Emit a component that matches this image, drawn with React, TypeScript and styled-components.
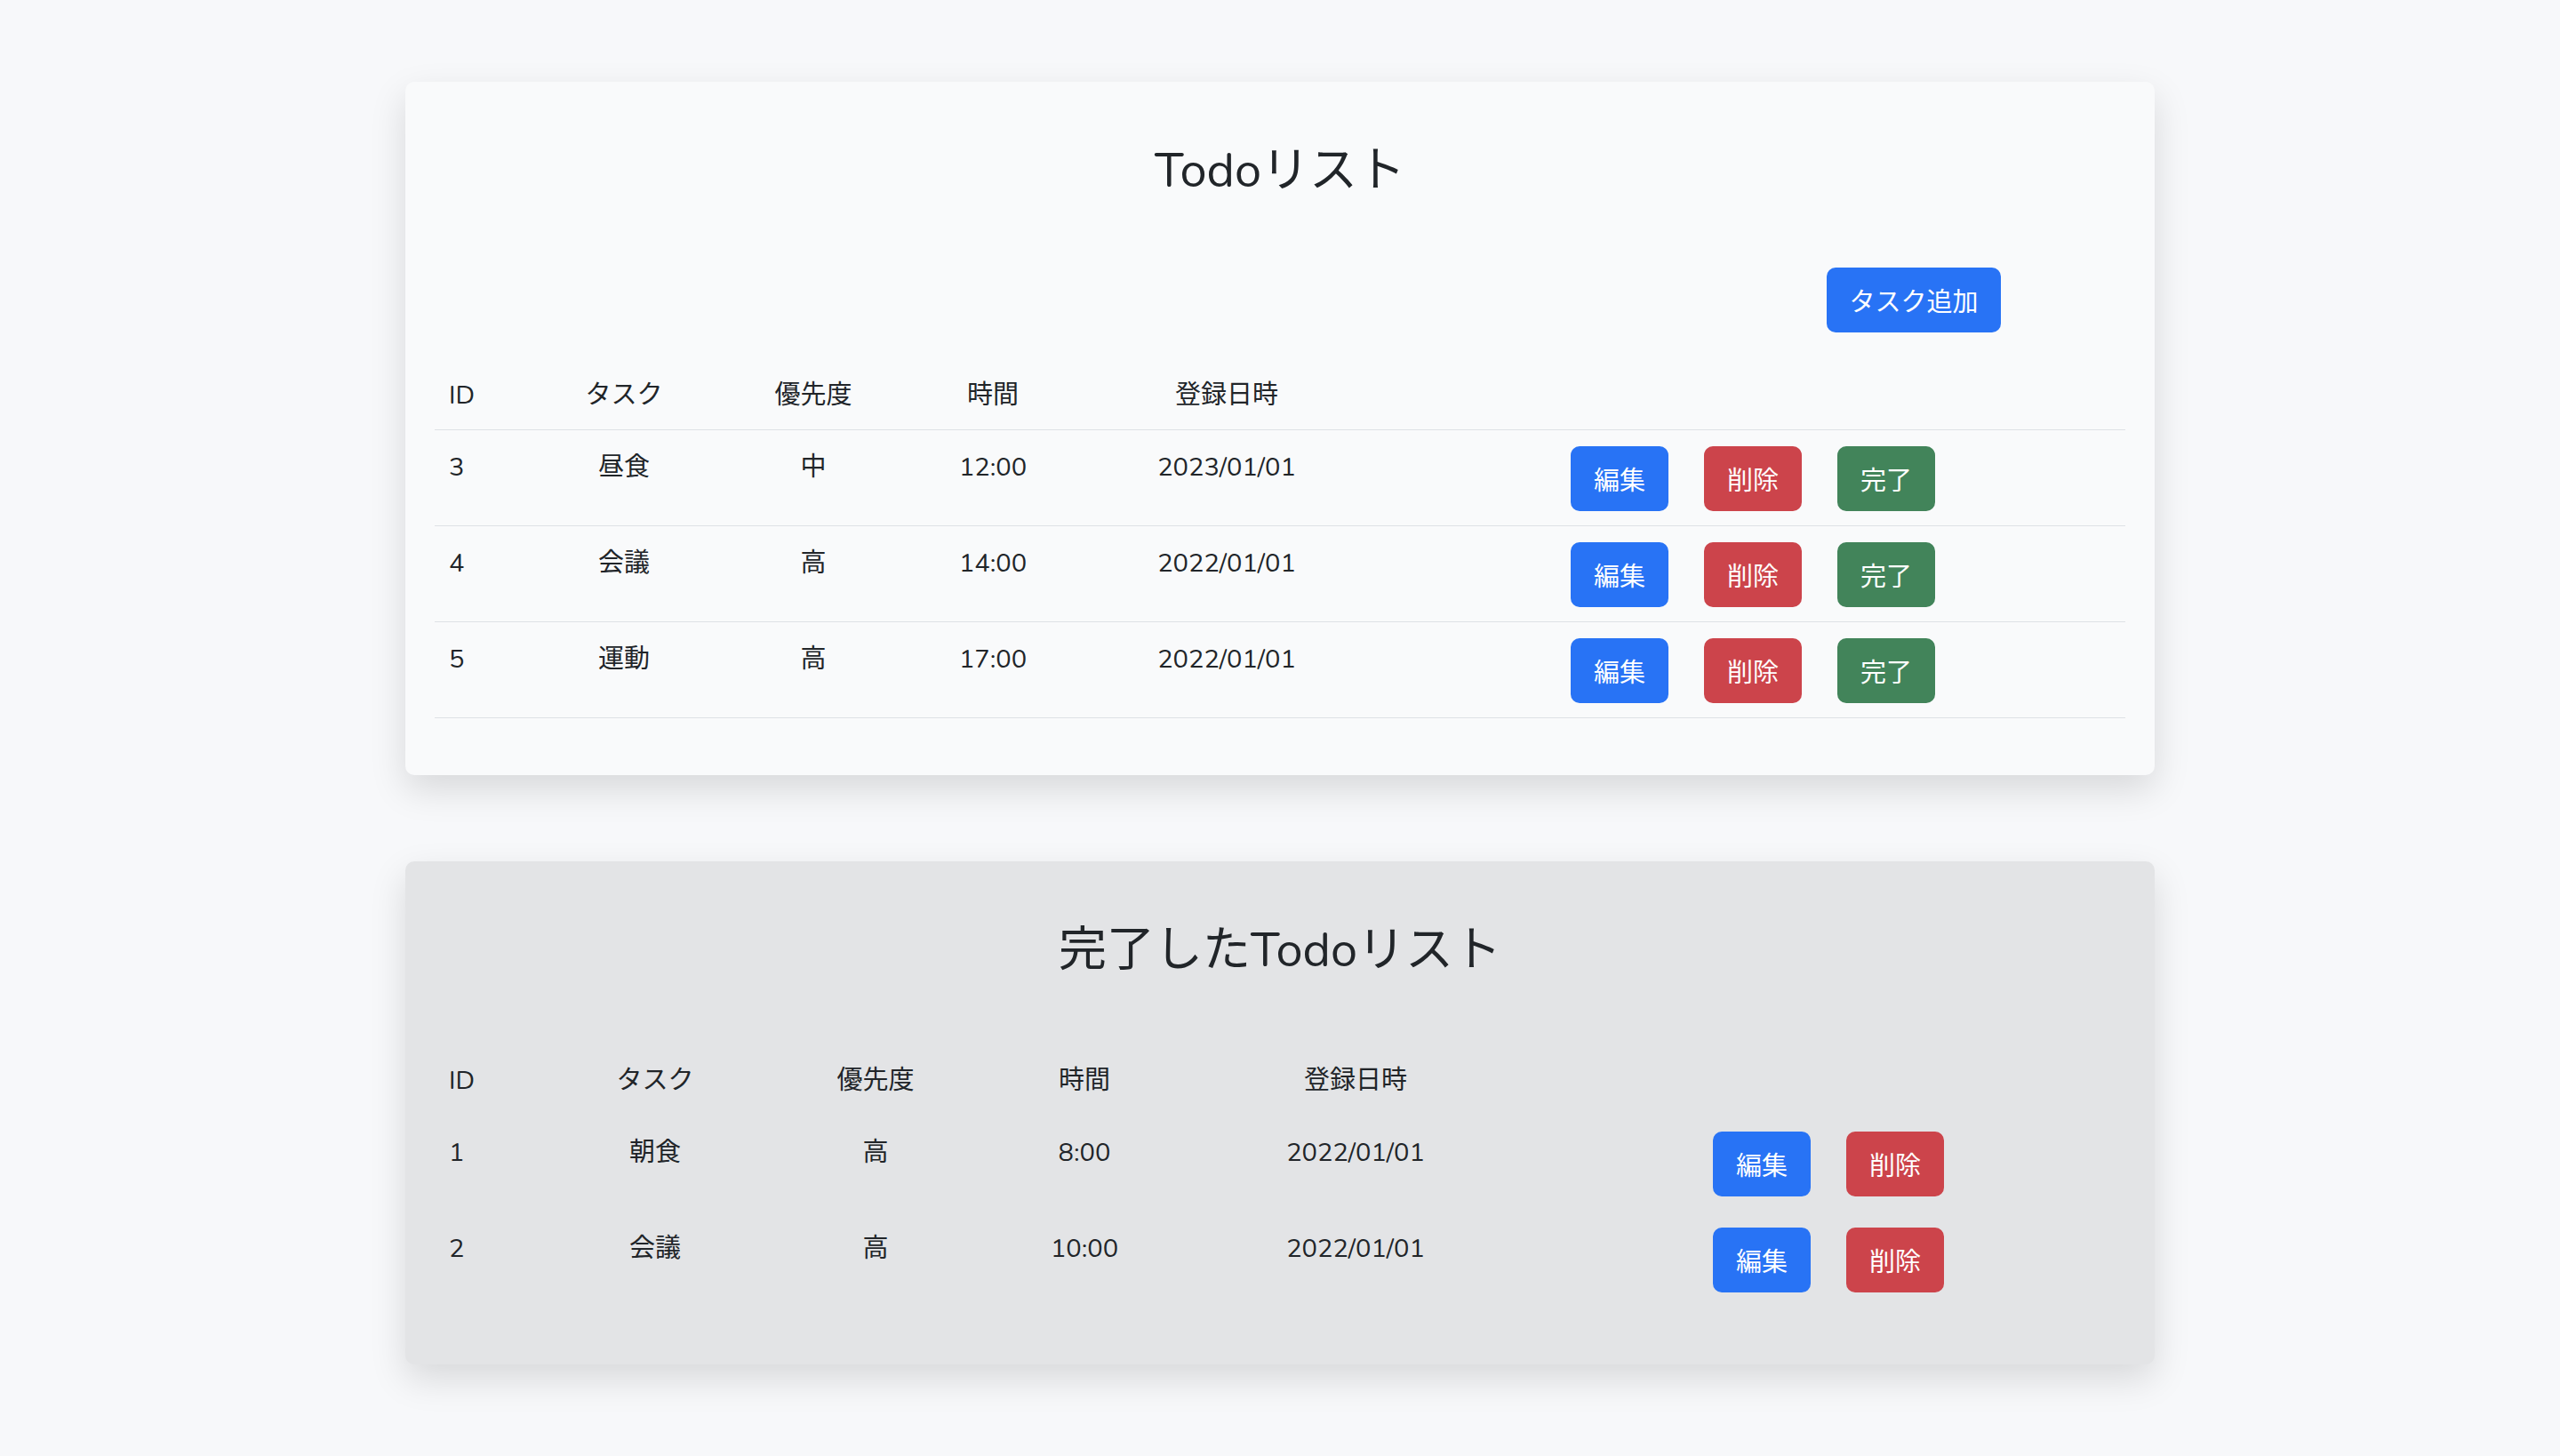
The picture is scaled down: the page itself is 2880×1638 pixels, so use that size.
import React from "react";
import styled, { createGlobalStyle } from "styled-components";

const Global = createGlobalStyle`
  body { margin: 0; background: #f7f8fa; font-family: "Nunito", Lato, "Noto Sans CJK JP", sans-serif; color: #212529; }
`;

const Page = styled.div`
  display: flex; flex-direction: column; align-items: center; gap: 97px; padding: 92px 0 98px;
`;
const Card = styled.div<{ $done?: boolean }>`
  width: 1968px; box-sizing: border-box; border-radius: 10px;
  background: ${p => (p.$done ? "#e3e4e6" : "#f9fafb")};
  box-shadow: 0 16px 40px rgba(0,0,0,0.13);
  padding: 67px 33px 64px;
`;
const Title = styled.h2`
  margin: 0; text-align: center; font-weight: 400; font-size: 54px; line-height: 66px;
`;
const AddBar = styled.div`
  display: flex; justify-content: flex-end; padding: 76px 140px 33px 0;
`;
const Gap = styled.div` height: 76px; `;
const Row = styled.div<{ $cols: string; $line: boolean }>`
  display: grid; grid-template-columns: ${p => p.$cols}; align-items: start;
  padding: 16px 0; border-bottom: 1px solid ${p => (p.$line ? "#dee2e6" : "transparent")};
  font-size: 29px; line-height: 44px;
`;
const Cell = styled.div<{ $left?: boolean }>`
  text-align: ${p => (p.$left ? "left" : "center")};
  padding: 4px 0 0 ${p => (p.$left ? "16px" : "0")};
`;
const HeadCell = styled(Cell)` padding-top: 0; `;
const Actions = styled.div<{ $pad: number }>`
  display: flex; gap: 40px; padding: 2px 0 0 ${p => p.$pad}px;
`;
const Btn = styled.button<{ $c: string; $w?: number }>`
  background: ${p => p.$c}; color: #fff; border: none; border-radius: 10px;
  height: 73px; width: ${p => (p.$w ? p.$w + "px" : "110px")};
  font-family: inherit; font-size: 29px; padding: 0;
`;

const BLUE = "#2873f5", RED = "#cc444b", GREEN = "#42845a";
const heads = ["ID", "タスク", "優先度", "時間", "登録日時"];

const cols1 = "129px 168px 258px 146px 380px 1fr";
const cols2 = "131px 234px 262px 208px 402px 1fr";

const todo = [
  ["3", "昼食", "中", "12:00", "2023/01/01"],
  ["4", "会議", "高", "14:00", "2022/01/01"],
  ["5", "運動", "高", "17:00", "2022/01/01"],
];
const done = [
  ["1", "朝食", "高", "8:00", "2022/01/01"],
  ["2", "会議", "高", "10:00", "2022/01/01"],
];

function Header({ cols, line }: { cols: string; line: boolean }) {
  return (
    <Row $cols={cols} $line={line}>
      {heads.map((h, i) => <HeadCell key={h} $left={i === 0}>{h}</HeadCell>)}
      <div />
    </Row>
  );
}

export default function App() {
  return (
    <>
      <Global />
      <Page>
        <Card>
          <Title>Todoリスト</Title>
          <AddBar><Btn $c={BLUE} $w={196}>タスク追加</Btn></AddBar>
          <Header cols={cols1} line />
          {todo.map(r => (
            <Row key={r[0]} $cols={cols1} $line>
              {r.map((v, i) => <Cell key={i} $left={i === 0}>{v}</Cell>)}
              <Actions $pad={197}>
                <Btn $c={BLUE}>編集</Btn><Btn $c={RED}>削除</Btn><Btn $c={GREEN}>完了</Btn>
              </Actions>
            </Row>
          ))}
        </Card>
        <Card $done>
          <Title>完了したTodoリスト</Title>
          <Gap />
          <Header cols={cols2} line={false} />
          {done.map(r => (
            <Row key={r[0]} $cols={cols2} $line={false}>
              {r.map((v, i) => <Cell key={i} $left={i === 0}>{v}</Cell>)}
              <Actions $pad={201}>
                <Btn $c={BLUE}>編集</Btn><Btn $c={RED}>削除</Btn>
              </Actions>
            </Row>
          ))}
        </Card>
      </Page>
    </>
  );
}
